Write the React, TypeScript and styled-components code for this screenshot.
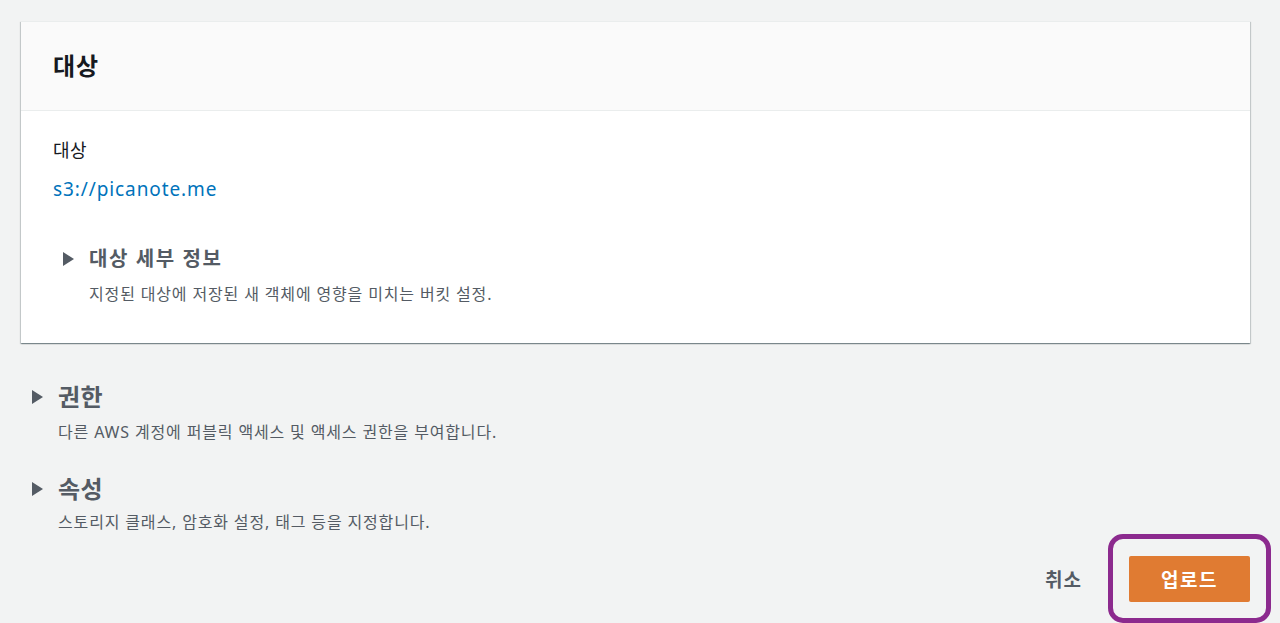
import React from 'react';
import styled, { createGlobalStyle } from 'styled-components';

const FONT = `"Noto Sans", "Noto Sans CJK KR", sans-serif`;

const GlobalStyle = createGlobalStyle`
  html, body {
    margin: 0;
    padding: 0;
    background: #f2f3f3;
    font-family: ${FONT};
    color: #16191f;
  }
  * { box-sizing: border-box; }
`;

const Page = styled.div`
  padding: 21px 30px 0 21px;
  min-height: 623px;
`;

const Card = styled.section`
  background: #fff;
  border-top: 1px solid #eaeded;
  box-shadow: 0 1px 1px 0 rgba(0, 28, 36, 0.3), 1px 1px 1px 0 rgba(0, 28, 36, 0.15),
    -1px 1px 1px 0 rgba(0, 28, 36, 0.15);
`;

const CardHeader = styled.header`
  height: 89px;
  display: flex;
  align-items: center;
  padding: 0 32px;
  background: #fafafa;
  border-bottom: 1px solid #eaeded;
`;

const CardTitle = styled.h2`
  margin: 0;
  font-size: 24px;
  line-height: 32px;
  font-weight: 700;
  letter-spacing: 1px;
  color: #16191f;
`;

const CardBody = styled.div`
  padding: 26px 32px 38px;
`;

const Label = styled.div`
  font-size: 18px;
  line-height: 26px;
  letter-spacing: 0.5px;
  color: #16191f;
`;

const Link = styled.a`
  display: block;
  margin-top: 13px;
  font-size: 19px;
  line-height: 26px;
  letter-spacing: 0.9px;
  color: #0073bb;
  text-decoration: none;
`;

const Expandable = styled.div<{ $indent: number; $top: number }>`
  margin-top: ${(p) => p.$top}px;
  padding-left: ${(p) => p.$indent}px;
`;

const ExpandHeader = styled.div<{ $size: number; $spacing: number }>`
  display: flex;
  align-items: center;
  gap: 15px;
  font-size: ${(p) => p.$size}px;
  line-height: 32px;
  font-weight: 700;
  letter-spacing: ${(p) => p.$spacing}px;
  color: #545b64;
`;

const Caret = styled.span`
  width: 0;
  height: 0;
  border-top: 7.5px solid transparent;
  border-bottom: 7.5px solid transparent;
  border-left: 11px solid #545b64;
  flex: none;
`;

const ExpandDesc = styled.div<{ $top: number }>`
  margin-top: ${(p) => p.$top}px;
  padding-left: 26px;
  font-size: 16px;
  line-height: 22px;
  letter-spacing: 0.85px;
  color: #545b64;
`;

const Footer = styled.div`
  display: flex;
  justify-content: flex-end;
  align-items: center;
  margin-top: 1px;
`;

const TextButton = styled.button`
  background: none;
  border: none;
  padding: 0;
  margin-right: 26px;
  font-family: ${FONT};
  font-size: 19px;
  font-weight: 700;
  letter-spacing: 1px;
  color: #545b64;
  cursor: pointer;
`;

const Highlight = styled.div`
  margin-right: -21px;
  padding: 17px 16px 16px;
  border: 5px solid #8c2a8e;
  border-radius: 15px;
`;

const PrimaryButton = styled.button`
  width: 121px;
  height: 46px;
  border: none;
  border-radius: 2px;
  background: #e07b32;
  color: #fff;
  font-family: ${FONT};
  font-size: 19px;
  font-weight: 700;
  letter-spacing: 1.5px;
  cursor: pointer;
`;

export default function App() {
  return (
    <>
      <GlobalStyle />
      <Page>
        <Card>
          <CardHeader>
            <CardTitle>대상</CardTitle>
          </CardHeader>
          <CardBody>
            <Label>대상</Label>
            <Link href="#">s3://picanote.me</Link>
            <Expandable $indent={10} $top={41}>
              <ExpandHeader $size={20} $spacing={1.6}>
                <Caret />
                대상 세부 정보
              </ExpandHeader>
              <ExpandDesc $top={8}>지정된 대상에 저장된 새 객체에 영향을 미치는 버킷 설정.</ExpandDesc>
            </Expandable>
          </CardBody>
        </Card>

        <Expandable $indent={11} $top={38}>
          <ExpandHeader $size={24} $spacing={0.5}>
            <Caret />
            권한
          </ExpandHeader>
          <ExpandDesc $top={8}>다른 AWS 계정에 퍼블릭 액세스 및 액세스 권한을 부여합니다.</ExpandDesc>
        </Expandable>

        <Expandable $indent={11} $top={30}>
          <ExpandHeader $size={24} $spacing={0.5}>
            <Caret />
            속성
          </ExpandHeader>
          <ExpandDesc $top={6}>스토리지 클래스, 암호화 설정, 태그 등을 지정합니다.</ExpandDesc>
        </Expandable>

        <Footer>
          <TextButton>취소</TextButton>
          <Highlight>
            <PrimaryButton>업로드</PrimaryButton>
          </Highlight>
        </Footer>
      </Page>
    </>
  );
}
